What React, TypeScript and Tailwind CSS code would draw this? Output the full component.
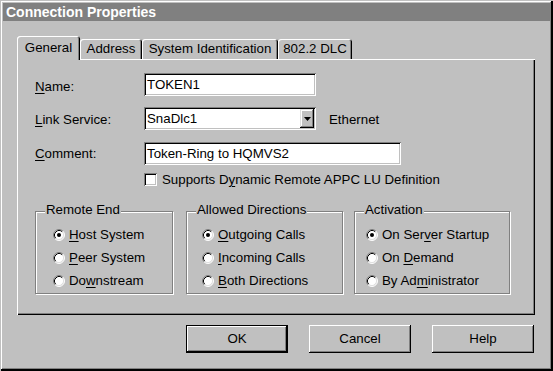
import React from "react";

const U = ({ children }: { children: React.ReactNode }) => (
  <span className="underline decoration-1 underline-offset-[2px]">{children}</span>
);

function Radio({ checked }: { checked?: boolean }) {
  return (
    <svg width="12" height="12" viewBox="0 0 12 12" className="shrink-0">
      <circle cx="6" cy="6" r="5" fill="#fff" />
      <path d="M2.11 9.89 A5.5 5.5 0 0 1 9.89 2.11" fill="none" stroke="#808080" />
      <path d="M9.89 2.11 A5.5 5.5 0 0 1 2.11 9.89" fill="none" stroke="#fff" />
      <path d="M2.82 9.18 A4.5 4.5 0 0 1 9.18 2.82" fill="none" stroke="#000" />
      <path d="M9.18 2.82 A4.5 4.5 0 0 1 2.82 9.18" fill="none" stroke="#dfdfdf" />
      {checked && <circle cx="6" cy="6" r="2" fill="#000" />}
    </svg>
  );
}

type Item = { label: React.ReactNode; checked?: boolean };

function Group({
  title,
  items,
  className,
}: {
  title: string;
  items: Item[];
  className: string;
}) {
  return (
    <div
      className={`relative h-[83px] border border-[#808080] shadow-[inset_1px_1px_0_#fff,1px_1px_0_#fff] pt-[12px] flex flex-col gap-[1px] ${className}`}
    >
      <span className="absolute -top-[10px] left-[9px] bg-[#c0c0c0] px-[1px] leading-[16px]">
        {title}
      </span>
      {items.map((it, i) => (
        <div key={i} className="h-[22px] flex items-center gap-[4px]">
          <Radio checked={it.checked} />
          <span>{it.label}</span>
        </div>
      ))}
    </div>
  );
}

const sunken =
  "shadow-[inset_1px_1px_0_#808080,inset_-1px_-1px_0_#fff,inset_2px_2px_0_#000,inset_-2px_-2px_0_#c0c0c0]";

export default function App() {
  return (
    <div className="w-[553px] h-[371px] bg-[#c0c0c0] p-[3px] flex flex-col text-black text-[13.3px] leading-[16px] font-['Liberation_Sans',Arial,sans-serif] shadow-[inset_1px_1px_0_#c0c0c0,inset_-2px_-2px_0_#000,inset_2px_2px_0_#fff,inset_-3px_-3px_0_#808080]">
      <div className="h-[18px] bg-[#808080] text-white font-bold text-[14px] pl-[3px] flex items-center">
        Connection Properties
      </div>

      <div className="mt-[15px] ml-[14px] h-[24px] -mb-[1px] flex items-end relative z-10">
        <div className="h-[24px] w-[63px] bg-[#c0c0c0] rounded-t-[3px] flex items-center justify-center shadow-[inset_1px_1px_0_#fff,inset_-1px_0_0_#000,inset_-2px_0_0_#808080]">
          General
        </div>
        <div className="h-[20px] mb-[1px] w-[62px] rounded-t-[3px] flex items-center justify-center shadow-[inset_1px_1px_0_#fff,inset_-1px_0_0_#000,inset_-2px_0_0_#808080]">
          Address
        </div>
        <div className="h-[20px] mb-[1px] w-[136px] rounded-t-[3px] flex items-center justify-center shadow-[inset_1px_1px_0_#fff,inset_-1px_0_0_#000,inset_-2px_0_0_#808080]">
          System Identification
        </div>
        <div className="h-[20px] mb-[1px] w-[74px] rounded-t-[3px] flex items-center justify-center shadow-[inset_1px_1px_0_#fff,inset_-1px_0_0_#000,inset_-2px_0_0_#808080]">
          802.2 DLC
        </div>
      </div>

      <div className="ml-[14px] w-[518px] h-[256px] pt-[14px] pl-[18px] shadow-[inset_1px_1px_0_#fff,inset_-1px_-1px_0_#000,inset_-2px_-2px_0_#808080]">
        <div className="flex items-center h-[23px]">
          <span className="w-[109px] pt-[5px]">
            <U>N</U>ame:
          </span>
          <div className={`w-[172px] h-[23px] bg-white pl-[3px] flex items-center ${sunken}`}>
            TOKEN1
          </div>
        </div>

        <div className="mt-[11px] flex items-center h-[23px]">
          <span className="w-[109px] pt-[3px]">
            <U>L</U>ink Service:
          </span>
          <div className={`w-[172px] h-[23px] bg-white p-[2px] flex items-stretch ${sunken}`}>
            <span className="flex-1 pl-[1px] flex items-center">SnaDlc1</span>
            <span className="w-[14px] bg-[#c0c0c0] flex items-center justify-center shadow-[inset_-1px_-1px_0_#000,inset_1px_1px_0_#dfdfdf,inset_-2px_-2px_0_#808080,inset_2px_2px_0_#fff]">
              <svg width="7" height="4" viewBox="0 0 7 4">
                <path d="M0 0 H7 L3.5 4 Z" fill="#000" />
              </svg>
            </span>
          </div>
          <span className="ml-[13px] pt-[3px]">Ethernet</span>
        </div>

        <div className="mt-[12px] flex items-center h-[23px]">
          <span className="w-[109px] pt-[1px]">
            <U>C</U>omment:
          </span>
          <div className={`w-[257px] h-[23px] bg-white pl-[3px] flex items-center ${sunken}`}>
            Token-Ring to HQMVS2
          </div>
        </div>

        <div className="mt-[8px] h-[13px] pl-[109px] flex items-center gap-[5px]">
          <span className={`w-[13px] h-[13px] bg-white ${sunken}`} />
          <span>
            Supports D<U>y</U>namic Remote APPC LU Definition
          </span>
        </div>

        <div className="mt-[25px] flex">
          <Group
            title="Remote End"
            className="w-[138px] pl-[17px]"
            items={[
              { label: (<><U>H</U>ost System</>), checked: true },
              { label: (<><U>P</U>eer System</>) },
              { label: (<>Do<U>w</U>nstream</>) },
            ]}
          />
          <Group
            title="Allowed Directions"
            className="ml-[13px] w-[157px] pl-[15px]"
            items={[
              { label: (<><U>O</U>utgoing Calls</>), checked: true },
              { label: (<><U>I</U>ncoming Calls</>) },
              { label: (<><U>B</U>oth Directions</>) },
            ]}
          />
          <Group
            title="Activation"
            className="ml-[11px] w-[156px] pl-[11px]"
            items={[
              { label: (<>On Ser<U>v</U>er Startup</>), checked: true },
              { label: (<>On <U>D</U>emand</>) },
              { label: (<>By Ad<U>m</U>inistrator</>) },
            ]}
          />
        </div>
      </div>

      <div className="mt-[10px] flex justify-end gap-[21px] pr-[16px]">
        <button className="w-[102px] h-[28px] border border-black flex items-center justify-center shadow-[inset_-1px_-1px_0_#000,inset_1px_1px_0_#fff,inset_-2px_-2px_0_#808080]">
          OK
        </button>
        <button className="w-[102px] h-[28px] flex items-center justify-center shadow-[inset_-1px_-1px_0_#000,inset_1px_1px_0_#fff,inset_-2px_-2px_0_#808080]">
          Cancel
        </button>
        <button className="w-[102px] h-[28px] flex items-center justify-center shadow-[inset_-1px_-1px_0_#000,inset_1px_1px_0_#fff,inset_-2px_-2px_0_#808080]">
          Help
        </button>
      </div>
    </div>
  );
}
